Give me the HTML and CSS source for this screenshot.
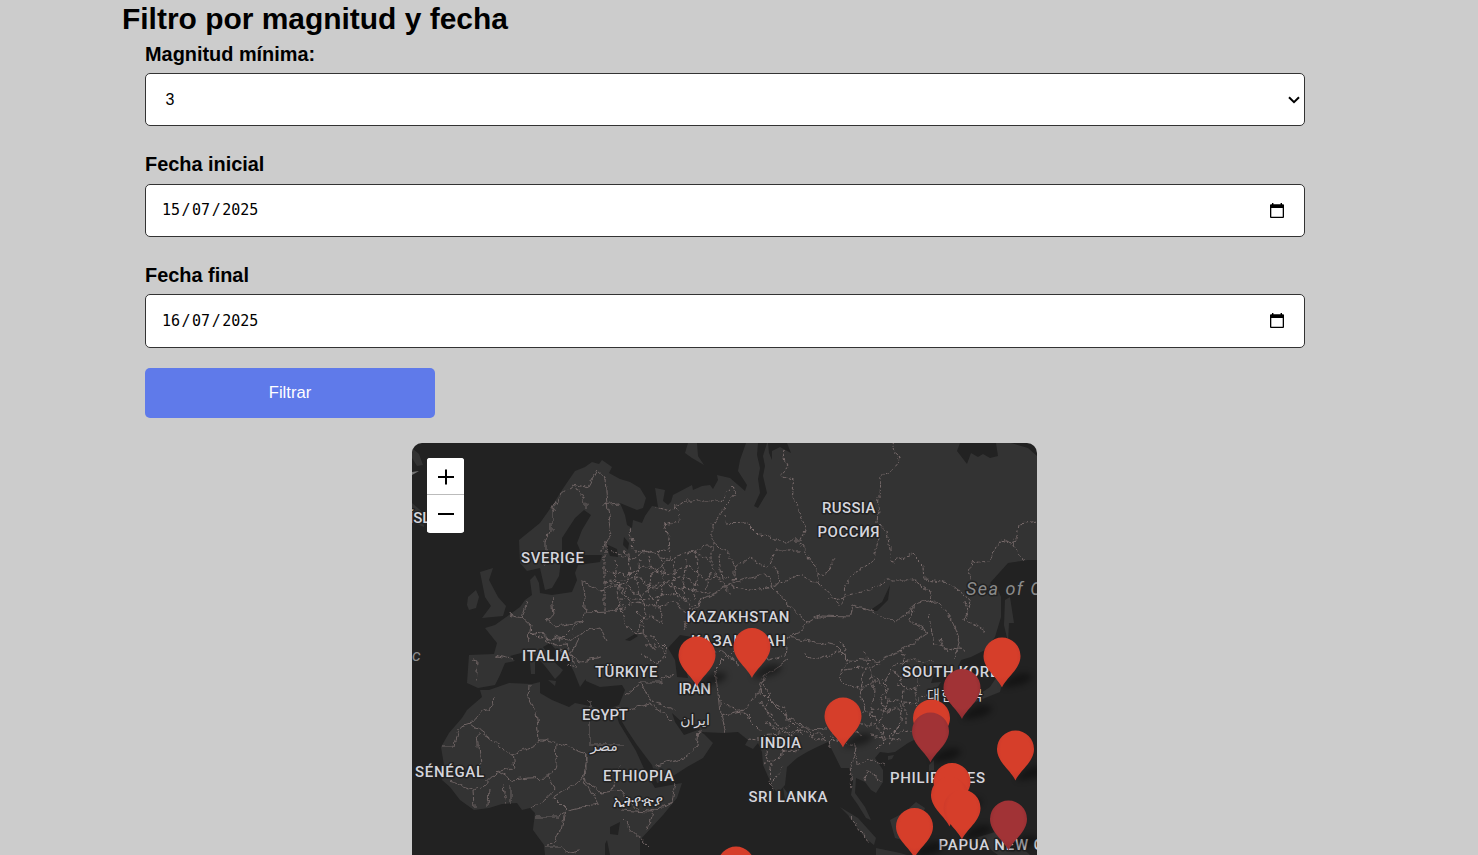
FILE: index.html
```html
<!DOCTYPE html>
<html lang="es">
<head>
<meta charset="utf-8">
<title>Filtro por magnitud y fecha</title>
<link rel="stylesheet" href="styles.css">
</head>
<body>
<main class="page">
  <h2 class="title">Filtro por magnitud y fecha</h2>
  <form class="filters">
    <label class="label" for="mag">Magnitud mínima:</label>
    <div class="field select"><span>3</span>
      <svg class="chevron" width="12" height="8" viewBox="0 0 12 8"><path d="M1 1.2 6 6.2 11 1.2"/></svg>
    </div>
    <label class="label raised">Fecha inicial</label>
    <div class="field date"><span class="value"><i>15</i>/<i>07</i>/<i>2025</i></span>
      <svg class="calendar" width="14" height="15" viewBox="0 0 14 15"><path d="M2 0h1.4v1.3h7.2V0H12v1.3h1a1 1 0 0 1 1 1V14a1 1 0 0 1-1 1H1a1 1 0 0 1-1-1V2.300a1 1 0 0 1 1-1h1zM1.300 5v8.700h11.400V5z"/></svg>
    </div>
    <label class="label">Fecha final</label>
    <div class="field date last"><span class="value"><i>16</i>/<i>07</i>/<i>2025</i></span>
      <svg class="calendar" width="14" height="15" viewBox="0 0 14 15"><path d="M2 0h1.4v1.3h7.2V0H12v1.3h1a1 1 0 0 1 1 1V14a1 1 0 0 1-1 1H1a1 1 0 0 1-1-1V2.300a1 1 0 0 1 1-1h1zM1.300 5v8.700h11.400V5z"/></svg>
    </div>
    <button class="submit" type="button">Filtrar</button>
  </form>
  <section class="map">
    <svg class="canvas" width="625" height="412" viewBox="412 443 625 412">
      <defs>
        <filter id="rough" x="412" y="443" width="625" height="412" filterUnits="userSpaceOnUse"><feTurbulence type="fractalNoise" baseFrequency=".11" numOctaves="3" seed="4"/><feDisplacementMap in="SourceGraphic" scale="8" xChannelSelector="R" yChannelSelector="G"/></filter>
        <filter id="soft" x="-50%" y="-50%" width="200%" height="200%"><feGaussianBlur stdDeviation="3"/></filter>
        <radialGradient id="red" cx=".5" cy=".4" r=".6"><stop offset=".65" stop-color="#d63e2a"/><stop offset="1" stop-color="#c9382a"/></radialGradient>
        <radialGradient id="dark" cx=".5" cy=".4" r=".6"><stop offset=".65" stop-color="#a13336"/><stop offset="1" stop-color="#8f2c30"/></radialGradient>
        <path id="pin" d="M0 .5C-4-9-18.500-18-18.500-31A18.500 18.500 0 0 1 18.500-31C18.500-18 4-9 0 .5Z"/>
        <path id="shade" d="M0 0C4-8 14-15 24-14S30-5 18-2 5 0 0 0Z"/>
      </defs>
      <g class="land">
        <path d="M519 540 540 523 552 506 562 490 575 471 585 467 592 462 599 464 602 460 612 467 609 473 620 479 630 482 640 488 646 498 643 508 637 510 620 503 625 515 627 525 632 528 633 520 642 523 645 516 652 506 658 507 655 488 665 490 663 501 668 505 671 502 673 495 692 485 693 490 702 486 710 485 713 489 718 480 717 475 730 478 745 491 747 485 738 471 740 460 746 443H1011L1028 448 1037 456V560L1028 560 1008 563 990 583 998 590 1001 597 1001 617 995 637 985 650 971 657 961 660 958 667 966 680 966 691 957 694 953 684 948 677 943 668 934 674 931 683 941 682 935 691 937 710 930 725 916 739 908 743 895 752 888 753 880 752 875 758 883 770 883 782 876 793 871 790 865 782 856 778 855 793 865 807 871 820 866 818 858 805 851 795 853 782 850 768 841 768 836 758 828 742 817 747 807 752 797 758 787 767 785 785 778 793 773 788 763 765 762 752 758 743 753 749 745 745 748 740 738 732 723 733 702 732 695 724 683 723 672 713 675 722 684 735 698 730 704 734 713 743 703 758 687 767 670 778 657 783 652 765 637 745 627 730 615 710 619 723 636 751 646 773 655 788 682 783 677 798 663 815 640 840 640 855H545L544 845 533 830 535 813 530 808 522 810 517 803 502 804 489 808 474 810 460 800 450 787 442 780 444 765 441 747 449 733 462 718 467 710 482 697 480 690 489 690 509 683 532 684 540 682 540 693 552 700 569 707 575 703 585 705 605 710 619 705 625 690 622 685 600 687 586 681 582 666 595 665 600 658 602 643 612 637 620 647 633 643 637 638 633 648 640 650 648 660 643 666 627 663 603 665 590 670 585 680 580 687 574 672 568 660 558 652 550 643 543 647 552 660 563 670 560 674 555 679 545 666 535 655 525 652 510 656 515 661 505 663 500 675 495 685 478 688 467 683 469 655 494 654 497 643 485 628 495 625 509 615 520 607 525 600 532 595 530 580 535 575 539 583 540 593 552 595 572 592 577 580 575 573 578 565 600 562 602 555 582 555 577 543 582 530 591 515 584 510 575 518 562 538 562 553 559 576 552 588 545 590 540 568 527 571 520 563Z"/>
        <path d="M480 572 493 568 489 580 498 597 506 606 503 616 482 618 491 606 485 597ZM467 605 468 597 476 590 479 597 476 608 469 610ZM688 443 685 453 692 458 704 465 698 456 697 443ZM1005 600 1010 597 1014 623 1009 623 1008 642 1004 625ZM1003 680 1000 692 985 698 971 704 975 697 990 687 998 675ZM840 807 858 818 876 838 874 845 865 838 848 815ZM876 848 900 853 907 855 876 855ZM890 820 905 812 916 802 925 808 918 828 910 842 895 838ZM888 756 894 755 892 759 888 760ZM929 765 934 760 934 775 929 772ZM975 838 995 832 1018 844 1030 855H998ZM412 448 419 454 423 465 417 466 412 458ZM412 503 426 515 424 527 412 522ZM783 787 789 795 785 800ZM530 662 535 661 535 674 531 674ZM548 680 556 681 555 686Z"/>
      </g>
      <path class="water" d="M758 443 757 455 760 468 758 479 760 493 754 506 758 508 767 493 763 476 765 466 763 456 767 443ZM768 443 769 453 772 460 772 451 780 447 791 453 787 443ZM960 443 957 451 967 464 971 453 978 457 983 454 990 458 998 456 996 443ZM680 635 668 648 675 660 677 677 688 678 683 653 692 637ZM890 585 888 600 877 611 869 611 882 602ZM624 537 629 543 628 550 623 545ZM625 640 635 634 638 636 630 641ZM610 827 620 822 618 835 610 834ZM605 844 607 840 610 855H605ZM606 544 617 549 618 557 610 556Z"/>
      <path class="ice" d="M412 472 419 471 412 475Z"/>
      <g class="borders" filter="url(#rough)">
        <path class="solid" d="M545 567V540L552 530V512L560 495 574 483 586 504V510M574 483 588 487 597 471 605 478 607 504 612 533 599 552M603 505 619 503M494 655 511 659M473 660 478 661 476 682M509 615 522 618 527 602M522 618 530 625 528 640M552 595 554 615 545 620 556 626 569 624 582 622 585 608 582 580 600 590 612 583 630 597M582 622 570 630 560 640 545 636 530 633 526 642M553 637 570 640 578 634 600 628 607 642M578 638 570 655 580 662 601 658M545 639 555 645 567 644 575 665M585 612 610 611 625 605M530 684 529 700 536 712 539 740 545 740 557 742M494 697 495 705 478 715 470 724 512 755 545 740M470 724 458 728 454 747H441M478 733 481 767 M512 755 514 767 497 772 480 788 473 790M557 742 586 754V771L580 780 553 798 M557 742 556 765 548 777 530 778 512 780 497 771M548 777 555 789 545 800 532 807M589 700V745H625M617 708 625 710M586 754 583 778 597 804 567 811 553 797M583 778 600 793 620 790 640 812M473 790 474 808M490 788 489 806M502 785 505 804M511 785 511 803M448 781 473 788M535 817H557L565 812 560 835 545 847H560L565 853 580 850M612 790 620 765M625 695 640 682 660 682 673 675M640 682 650 700 675 710M625 710 650 704 672 720M657 765 685 757 697 747 699 730M620 810 650 812 672 803 675 783M622 820 648 847M653 811 647 830M718 693 715 670 735 650 770 660 785 655 787 637 800 632 808 623 784 600 765 575 740 580 700 600 683 630M718 693 720 715 745 710 760 690 765 676 787 660M720 715 725 732M760 690 785 715 805 728 827 729M787 637 835 645 850 660 877 662 905 648 928 633 910 620 915 605 932 600 950 615 960 640 955 658M808 623 820 616 850 617 853 606 870 610 895 623 915 605M693 655 720 650 740 665"/>
        <path class="dashed" d="M783 448 787 465 782 475 795 480 792 496 805 525 800 545 815 565 819 583 840 605M656 507 670 511 685 501H720L733 485 735 495 712 525V570L705 590M724 515 725 524 748 523 760 535 785 540 803 540M712 543 728 553 736 568 750 558 768 567 775 551 800 551M675 508 680 522 664 525 670 538 668 560 650 575M630 530 635 552 668 550M686 553 712 545M893 443 900 460 888 474 880 477 879 497 877 524 887 530 892 562 912 554 924 566 925 580 950 583M879 535 874 560 855 573 845 585 843 605M968 583 972 562 990 560 1001 540 1015 545 1019 525 1037 522M1015 545 1023 561M736 568 733 587 760 590 780 583 775 567M780 583 800 576 820 584M828 600 848 595 870 590 888 580 915 580 928 590 932 602M950 583 970 600 965 620 985 630M840 640 848 660 838 680 860 690 865 710 850 720M860 690 885 678 895 665 915 660 935 662M885 678 887 700 915 703 930 690M887 700 880 725 900 733 915 728M865 710 885 725 880 750M850 720 836 730 828 747M832 740 855 745 857 765 870 758 884 765M857 747 850 765 852 790M865 782 868 770 883 783M718 700 745 715 765 735 800 730 824 742M748 740 780 743 800 730M765 765 783 753 800 748M770 785 784 767M850 817 870 842"/>
        <path class="dashed" d="M610 550 630 560 650 550 670 560 690 550 710 560M605 570 625 575 645 566 670 575 688 565 705 580 730 576M600 590 625 585 640 595 660 583 690 590 710 592M620 610 637 603 650 608 673 602 685 612 705 598M615 560 620 610 628 630 645 636 655 650M640 560 636 585 645 610 643 635M660 550 665 580 657 605 664 625M686 560 682 590 690 610M712 570 730 595M635 633 655 637 668 650 658 663 642 655M653 675 660 660M605 540 605 610M760 700 775 725 790 735 783 755M840 700 845 720 855 730M865 650 875 690 870 720M895 670 904 690 900 720 890 745M920 670 915 700 920 720M845 670 880 665M875 710 900 710M870 735 900 740M875 750 900 725M940 640 947 650M930 615 935 645 965 650M965 600 968 620"/>
        <path class="dashed" d="M626 550 630 573 625 590 632 605M648 555 652 572 648 592 655 602M675 560 673 583 678 602M695 552 698 575 694 598M720 555 722 580M605 582 640 578 655 590 680 576 700 585M620 598 650 600 668 592 690 600M640 622 650 616 662 622M645 645 660 645 667 657M636 612 645 620 638 632M765 752 772 765 768 780 774 790M783 745 795 752M800 722 812 735 820 732 825 745M762 680 770 695 765 710 775 716M770 700 785 708 790 722 803 735M765 722 778 730 790 725M865 668 860 690M873 675 885 690 880 705 893 710M897 685 910 690 922 685M905 703 905 725M860 725 875 725 885 737M900 650 905 665M840 650 820 660 805 655M835 560 825 575 815 572M848 727 862 735M530 630 538 638 548 637M560 650 570 655M567 665 577 667"/>
      </g>
      <g class="labels">
        <text x="409" y="522.500">ÍSL</text>
        <text x="521" y="563" textLength="63">SVERIGE</text>
        <text x="822" y="513" textLength="53.500">RUSSIA</text>
        <text x="817.500" y="536.500" textLength="62">РОССИЯ</text>
        <text x="686.500" y="621.500" textLength="103">KAZAKHSTAN</text>
        <text x="691" y="645.500" textLength="95">КАЗАҚСТАН</text>
        <text x="522" y="661" textLength="48">ITALIA</text>
        <text x="595" y="677" textLength="62.500">TÜRKIYE</text>
        <text x="678.500" y="694" textLength="32.500">IRAN</text>
        <text class="arabic" x="695" y="725" text-anchor="middle">ایران</text>
        <text x="582" y="720" textLength="46">EGYPT</text>
        <text class="arabic" x="604" y="751" text-anchor="middle">مصر</text>
        <text x="415" y="777" textLength="69">SÉNÉGAL</text>
        <text x="603" y="780.500" textLength="71">ETHIOPIA</text>
        <text x="613" y="806" textLength="50" lengthAdjust="spacingAndGlyphs">ኢትዮጵያ</text>
        <text x="760" y="747.500" textLength="41">INDIA</text>
        <text x="748.500" y="802" textLength="79">SRI LANKA</text>
        <text x="902" y="677" textLength="107">SOUTH KOREA</text>
        <text class="korean" x="927" y="700" textLength="56">대한민국</text>
        <text x="890" y="783" textLength="95">PHILIPPINES</text>
        <text x="938.500" y="849.500" textLength="152">PAPUA NEW GUINEA</text>
        <text class="sea" x="966" y="595" textLength="137">Sea of Okhotsk</text>
        <text class="sea small" x="412" y="661">c</text>
      </g>
      <g class="shadows" filter="url(#soft)">
        <use href="#shade" x="697" y="686"/><use href="#shade" x="752" y="678"/><use href="#shade" x="843" y="747"/><use href="#shade" x="1002" y="687"/><use href="#shade" x="962" y="719"/><use href="#shade" x="931" y="762"/><use href="#shade" x="1016" y="780"/><use href="#shade" x="952" y="812"/><use href="#shade" x="962" y="839"/><use href="#shade" x="914" y="856"/><use href="#shade" x="1008" y="850"/>
      </g>
      <g fill="url(#red)">
        <use href="#pin" x="752" y="677.500"/><use href="#pin" x="697" y="686"/><use href="#pin" x="1002" y="687"/>
        <use href="#pin" fill="url(#dark)" x="962" y="718.500"/>
        <use href="#pin" x="843" y="747"/><use href="#pin" x="931.500" y="749"/>
        <use href="#pin" fill="url(#dark)" x="930.500" y="762"/>
        <use href="#pin" x="1015.500" y="780"/><use href="#pin" x="952" y="812.500"/><use href="#pin" x="949.500" y="826"/><use href="#pin" x="962" y="839"/>
        <use href="#pin" fill="url(#dark)" x="1008.500" y="850"/>
        <use href="#pin" x="914.500" y="857.500"/><use href="#pin" x="736" y="896"/>
      </g>
    </svg>
    <div class="zoom">
      <button class="zoom-btn" type="button" aria-label="Acercar"><svg width="16" height="16" viewBox="0 0 16 16"><path d="M0 8h16M8 .5v15"/></svg></button>
      <button class="zoom-btn" type="button" aria-label="Alejar"><svg width="16" height="16" viewBox="0 0 16 16"><path d="M0 8h16"/></svg></button>
    </div>
  </section>
</main>
</body>
</html>
```
FILE: styles.css
```css
* { box-sizing: border-box; }
body { margin: 0; height: 855px; overflow: hidden; background: #ccc; color: #000; font-family: "Liberation Sans", Arial, sans-serif; }
.page { width: 1206px; margin-left: 122px; }
.title { margin: 0; height: 41px; padding-top: 2px; font-size: 29.950px; line-height: 34px; }
.filters { display: flex; flex-direction: column; align-items: flex-start; width: 1160px; margin-left: 23px; }
.label { height: 32px; padding-top: 2px; font-size: 19.900px; font-weight: bold; line-height: 23px; }
.label.raised { padding-top: 1px; }
.field { display: flex; align-items: center; justify-content: space-between; width: 100%; height: 53px; margin-bottom: 26px; border: 1px solid #333; border-radius: 5px; background: #fff; font-size: 16px; }
.select { padding: 0 4px 0 19.500px; }
.chevron { fill: none; stroke: #000; stroke-width: 2; }
.date { padding: 0 20px 0 16px; margin-bottom: 25px; }
.date.last { height: 54px; margin-bottom: 20px; }
.calendar { margin-bottom: 1px; }
.value { padding-bottom: 1px; font: 15px "DejaVu Sans Mono", monospace; }
.value i { padding: 0 1.500px; font-style: normal; }
.value i:first-child { padding-left: 0; }
.submit { width: 290px; height: 50px; padding: 0; border: 0; border-radius: 5px; background: #5f7aea; color: #fff; font: 16.600px "Liberation Sans", Arial, sans-serif; }
.map { position: relative; width: 625px; height: 412px; margin: 25px 0 0 290px; overflow: hidden; border-radius: 10px 10px 0 0; background: #222; }
.canvas { display: block; }
.land { fill: #333; }
.water { fill: #222; }
.ice { fill: #777; }
.borders { fill: none; stroke-width: .95; }
.solid { stroke: #716565; }
.dashed { stroke: #7c6f6f; stroke-dasharray: 3 1.5; }
.labels { fill: #d5d5dc; stroke: #222; stroke-width: 3px; stroke-linejoin: round; paint-order: stroke; font: 500 15px Roboto, "Noto Sans", sans-serif; }
.arabic { font: 14px "Noto Sans", "DejaVu Sans", sans-serif; }
.korean { font: 14px "Noto Sans CJK KR", sans-serif; }
.sea { fill: #8b8b8b; font: italic 18px Roboto, sans-serif; }
.sea.small { font-size: 17px; }
.shadows { fill: #000; opacity: .4; }
.zoom { position: absolute; left: 15px; top: 15px; width: 37px; height: 75px; overflow: hidden; border-radius: 3px; background: #fff; }
.zoom-btn { display: flex; align-items: center; justify-content: center; width: 37px; height: 37px; padding: 0 0 0 1px; border: 0; background: #fff; }
.zoom-btn:first-child { padding-top: 1px; border-bottom: 1px solid #bbb; }
.zoom-btn path { stroke: #000; stroke-width: 2; }
```
